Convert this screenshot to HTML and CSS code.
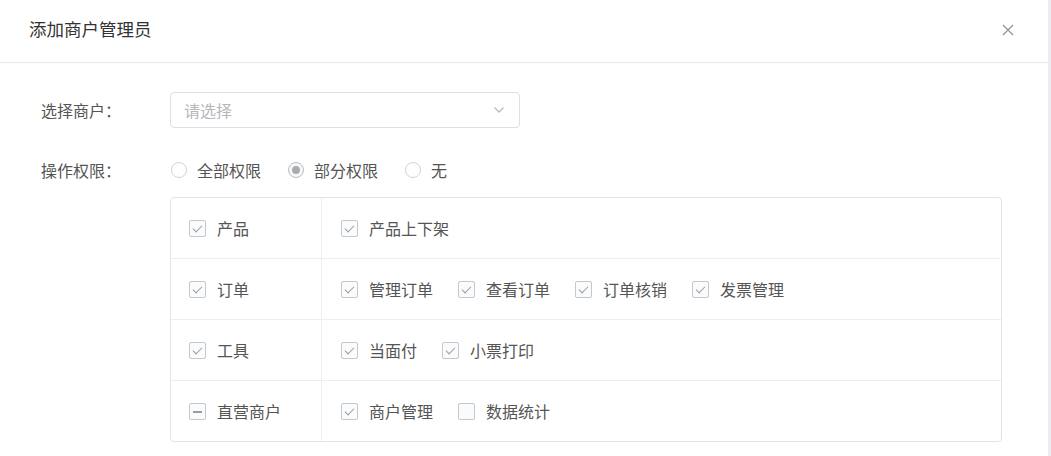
FILE: index.html
```html
<!DOCTYPE html>
<html lang="zh-CN">
<head>
<meta charset="utf-8">
<title>添加商户管理员</title>
<link rel="stylesheet" href="styles.css">
</head>
<body>
<div class="page">
  <div class="dialog">
    <header class="dlg-head">
      <h2 class="dlg-title">添加商户管理员</h2>
      <button class="dlg-close" aria-label="关闭">
        <svg width="12" height="12" viewBox="0 0 12 12"><path d="M1 1L11 11M11 1L1 11" stroke="#909399" stroke-width="1.3" fill="none"/></svg>
      </button>
    </header>
    <div class="dlg-body">
      <div class="form-row">
        <span class="form-label">选择商户：</span>
        <div class="select">
          <span class="select-ph">请选择</span>
          <svg class="select-arrow" width="12" height="8" viewBox="0 0 12 8"><path d="M1.5 1.5L6 6L10.5 1.5" stroke="#b8bbc0" stroke-width="1.3" fill="none"/></svg>
        </div>
      </div>
      <div class="form-row radio-row">
        <span class="form-label">操作权限：</span>
        <div class="radios">
          <label class="radio"><span class="radio-dot"></span>全部权限</label>
          <label class="radio"><span class="radio-dot on"></span>部分权限</label>
          <label class="radio"><span class="radio-dot"></span>无</label>
        </div>
      </div>
      <div class="perm-table">
        <div class="perm-row">
          <div class="perm-main"><span class="cb on"></span>产品</div>
          <div class="perm-subs">
            <span class="sub"><span class="cb on"></span>产品上下架</span>
          </div>
        </div>
        <div class="perm-row">
          <div class="perm-main"><span class="cb on"></span>订单</div>
          <div class="perm-subs">
            <span class="sub"><span class="cb on"></span>管理订单</span>
            <span class="sub"><span class="cb on"></span>查看订单</span>
            <span class="sub"><span class="cb on"></span>订单核销</span>
            <span class="sub"><span class="cb on"></span>发票管理</span>
          </div>
        </div>
        <div class="perm-row">
          <div class="perm-main"><span class="cb on"></span>工具</div>
          <div class="perm-subs">
            <span class="sub"><span class="cb on"></span>当面付</span>
            <span class="sub"><span class="cb on"></span>小票打印</span>
          </div>
        </div>
        <div class="perm-row">
          <div class="perm-main"><span class="cb half"></span>直营商户</div>
          <div class="perm-subs">
            <span class="sub"><span class="cb on"></span>商户管理</span>
            <span class="sub"><span class="cb"></span>数据统计</span>
          </div>
        </div>
      </div>
    </div>
  </div>
  <div class="scroll-strip"></div>
</div>
</body>
</html>
```

FILE: styles.css
```css
* { box-sizing: border-box; }
html, body { margin: 0; padding: 0; background: #fff; }
body {
  font-family: "Noto Sans CJK SC", "Noto Sans", sans-serif;
  color: #555;
  font-size: 16px;
}
.page { display: flex; height: 456px; overflow: hidden; }
.dialog { width: 1048px; flex: none; }
.scroll-strip { flex: 1; background: #ececf1; }

.dlg-head {
  height: 63px;
  border-bottom: 1px solid #e8e8ea;
  display: flex;
  align-items: center;
  justify-content: space-between;
  padding: 0 34px 4px 29px;
}
.dlg-title {
  margin: 0;
  font-size: 17.5px;
  font-weight: normal;
  color: #333;
  line-height: 1;
}
.dlg-close {
  border: 0; background: none; padding: 0; width: 12px; height: 12px;
  display: flex; margin-top: 2px;
}

.dlg-body { padding: 29px 0 0 41px; }
.form-row { display: flex; align-items: center; height: 36px; }
.form-label { width: 129px; flex: none; color: #555; font-size: 16px; }
.select {
  width: 350px; height: 36px;
  border: 1px solid #dcdfe6; border-radius: 4px;
  display: flex; align-items: center; justify-content: space-between;
  padding: 0 14px 0 13px;
}
.select-ph { color: #b4b7bc; font-size: 16px; }
.radio-row { margin-top: 32px; height: 20px; }
.radios { display: flex; align-items: center; }
.radio { display: flex; align-items: center; margin-right: 26px; color: #555; font-size: 16px; }
.radio-dot {
  width: 16px; height: 16px; border-radius: 50%;
  border: 1px solid #d0d3d8; margin-right: 10px; margin-left: 1px;
  display: flex; align-items: center; justify-content: center;
}
.radio-dot.on { background: #f5f7fa; border-color: #b8bbc0; }
.radio-dot.on::after {
  content: ""; width: 8px; height: 8px; border-radius: 50%; background: #a8abb0;
}

.perm-table {
  margin-top: 17px;
  margin-left: 129px;
  width: 832px;
  border: 1px solid #e1e3e8;
  border-radius: 4px;
}
.perm-row { display: flex; height: 61px; border-top: 1px solid #ebeef5; }
.perm-row:first-child { border-top: 0; height: 60px; }
.perm-main {
  width: 151px; flex: none;
  border-right: 1px solid #ebeef5;
  display: flex; align-items: center;
  padding-left: 18px;
  font-size: 16px; color: #555;
}
.perm-subs { display: flex; align-items: center; padding-left: 19px; font-size: 16px; }
.sub { display: flex; align-items: center; margin-right: 25px; }
.cb {
  width: 17px; height: 17px; flex: none;
  border: 1px solid #c4c7cc; border-radius: 2px;
  background: #fafbfc;
  margin-right: 11px;
  position: relative;
}
.cb.on::after {
  content: ""; position: absolute; left: 5px; top: 2px;
  width: 4px; height: 8px;
  border: solid #999ca1; border-width: 0 1.6px 1.6px 0;
  transform: rotate(45deg);
}
.cb.half::after {
  content: ""; position: absolute; left: 3px; right: 3px; top: 7px;
  height: 2px; background: #999ca1;
}
```
